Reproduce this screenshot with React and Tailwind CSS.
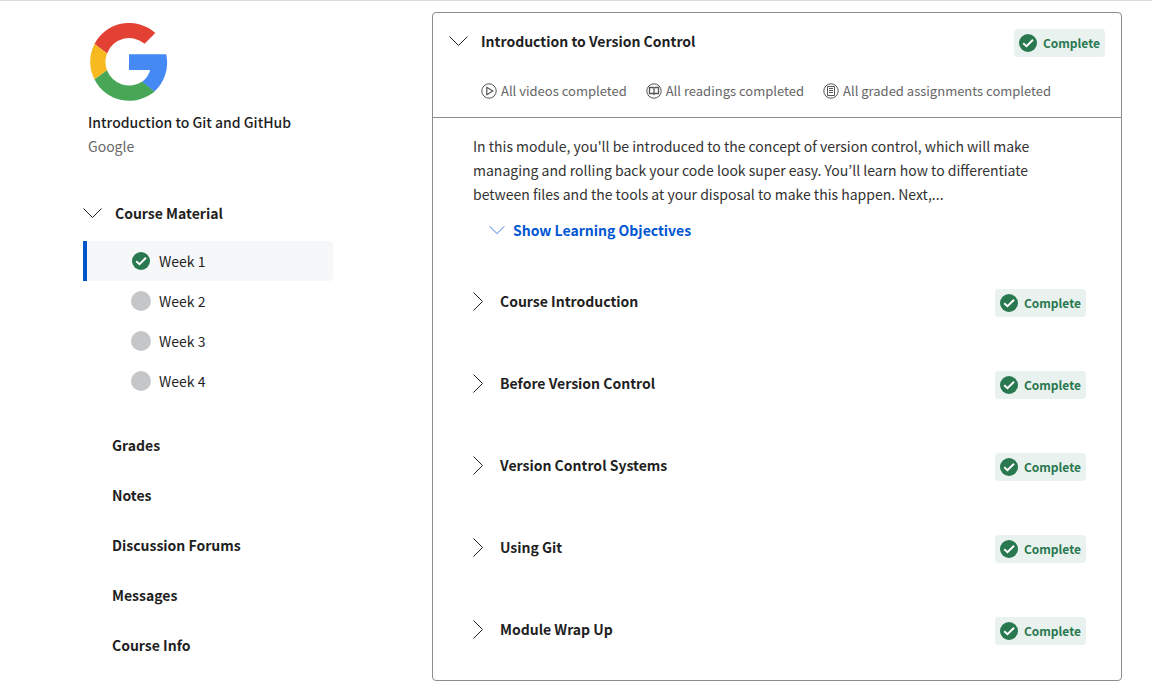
import React from "react";

function Chevron({ direction = "down", className = "" }) {
  const right = direction === "right";
  return (
    <svg
      aria-hidden="true"
      className={`shrink-0 ${className}`}
      viewBox={right ? "0 0 10 19" : "0 0 19 10"}
      fill="none"
      stroke="currentColor"
      strokeWidth="1"
    >
      <path d={right ? "M0.5 0.5 9.5 9.5 0.5 18.5" : "M0.5 0.5 9.5 9.5 18.5 0.5"} />
    </svg>
  );
}

function CheckCircle() {
  return (
    <svg aria-hidden="true" className="size-[18px] shrink-0" viewBox="0 0 18 18" fill="none">
      <circle cx="9" cy="9" r="9" fill="#2a7850" />
      <path d="M4.2 9.3 7.5 12.2 14 5.8" stroke="#fff" strokeWidth="2" />
    </svg>
  );
}

function GoogleLogo() {
  return (
    <svg role="img" aria-label="Google" className="size-[78px]" viewBox="-39 -39 78 78">
      <path fill="#e24134" d="M-34.5-18A39 39 0 0 1 26.3-29L15.6-18.2A23.6 23.6 0 0 0-21.9-8.6Z" />
      <path fill="#f7b920" d="M-34.5-18A39 39 0 0 0-34.5 17.6L-22 8.2A23.6 23.6 0 0 1-22-8.4Z" />
      <path fill="#48a757" d="M-34.5 17.6A39 39 0 0 0 25.6 29.4L13.4 19.6A23.8 23.8 0 0 1-22 8.2Z" />
      <path fill="#4489f4" d="M0-7.7H37.2A39 39 0 0 1 25.4 29.6L13.2 19.8A23 23 0 0 0 21.2 8H0Z" />
    </svg>
  );
}

function StatIcon({ kind }) {
  return (
    <svg
      aria-hidden="true"
      className="size-4 shrink-0"
      viewBox="0 0 16 16"
      fill="none"
      stroke="#555"
      strokeWidth="1"
    >
      <circle cx="8" cy="8" r="7.2" />
      {kind === "video" && <path d="M5.8 4.3v7.4L11.8 8Z" strokeWidth="1.2" />}
      {kind === "reading" && (
        <path d="M3.5 4.5H7L8 5.2 9 4.5h3.5v6H9L8 11.3 7 10.5H3.5ZM8 5.2v6.5" strokeWidth="1.3" />
      )}
      {kind === "assignment" && (
        <path d="M4.5 3.5h7v9h-7ZM6 5.5h4M6 7.5h4M6 9.5h4" />
      )}
    </svg>
  );
}

function CompleteBadge() {
  return (
    <span className="flex h-7 shrink-0 items-center gap-1.5 rounded bg-[#e9f2ee] px-[5px] text-[12px] leading-5 font-bold text-[#2a7850]">
      <CheckCircle />
      Complete
    </span>
  );
}

const weeks = ["Week 1", "Week 2", "Week 3", "Week 4"];
const links = ["Grades", "Notes", "Discussion Forums", "Messages", "Course Info"];
const stats = [
  ["video", "All videos completed"],
  ["reading", "All readings completed"],
  ["assignment", "All graded assignments completed"],
];
const lessons = [
  "Course Introduction",
  "Before Version Control",
  "Version Control Systems",
  "Using Git",
  "Module Wrap Up",
];

export default function App() {
  return (
    <div className="flex items-start gap-[99px] border-t border-[#dcdcdc] bg-white pr-[30px] pb-3 pl-[83px] font-['Noto_Sans_CJK_KR',sans-serif] text-[14px] leading-6 text-[#1f1f1f]">
      <aside className="w-[250px] shrink-0 pt-[22px]">
        <div className="pl-[5px]">
          <div className="pl-0.5">
            <GoogleLogo />
          </div>
          <h1 className="mt-[9px] font-medium">Introduction to Git and GitHub</h1>
          <p className="text-[#666]">Google</p>
        </div>

        <nav aria-label="Course">
          <button type="button" className="mt-[43px] flex items-center gap-[13px] font-bold">
            <Chevron className="h-2.5 w-[19px]" />
            Course Material
          </button>
          <ul className="mt-4">
            {weeks.map((week, i) => (
              <li key={week}>
                <a
                  href="#week"
                  aria-current={i === 0 ? "page" : undefined}
                  className={`flex h-10 items-center gap-2 rounded-r border-l-4 pl-11 ${
                    i === 0 ? "border-[#0056c8] bg-[#f5f7f8]" : "border-transparent"
                  }`}
                >
                  <span className="flex size-5 items-center justify-center">
                    {i === 0 ? <CheckCircle /> : <span className="size-5 rounded-full bg-[#c4c6c8]" />}
                  </span>
                  {week}
                </a>
              </li>
            ))}
          </ul>
          <ul className="mt-[19px] pl-[29px] font-bold">
            {links.map((label) => (
              <li key={label}>
                <a href="#section" className="flex h-[50px] items-center">
                  {label}
                </a>
              </li>
            ))}
          </ul>
        </nav>
      </aside>

      <main className="mt-[11px] min-w-0 flex-1 rounded border border-[#8c8c8c]">
        <header className="border-b border-[#8c8c8c] pt-4 pr-4 pb-3.5 pl-4">
          <div className="flex items-start justify-between">
            <h2>
              <button type="button" className="flex items-center gap-[13px] font-bold">
                <Chevron className="h-2.5 w-[19px]" />
                Introduction to Version Control
              </button>
            </h2>
            <CompleteBadge />
          </div>
          <ul className="mt-[22px] flex flex-wrap gap-x-[19px] pl-8 text-[13px] text-[#666]">
            {stats.map(([kind, label]) => (
              <li key={kind} className="flex items-center gap-1">
                <StatIcon kind={kind} />
                {label}
              </li>
            ))}
          </ul>
        </header>

        <div className="pt-4 pr-[35px] pb-2 pl-10">
          <p className="max-w-[600px] text-[#333]">
            In this module, you'll be introduced to the concept of version control, which will make
            managing and rolling back your code look super easy. You’ll learn how to differentiate
            between files and the tools at your disposal to make this happen. Next,...
          </p>
          <button type="button" className="mt-3 ml-4 flex items-center gap-2 font-bold text-[#0056d2]">
            <Chevron className="h-2 w-4" />
            Show Learning Objectives
          </button>
          <ul className="mt-5">
            {lessons.map((lesson) => (
              <li key={lesson} className="flex h-[82px] items-start justify-between pt-[27px]">
                <button type="button" className="flex items-center gap-[17px] font-bold">
                  <Chevron direction="right" className="h-[19px] w-2.5" />
                  {lesson}
                </button>
                <CompleteBadge />
              </li>
            ))}
          </ul>
        </div>
      </main>
    </div>
  );
}
